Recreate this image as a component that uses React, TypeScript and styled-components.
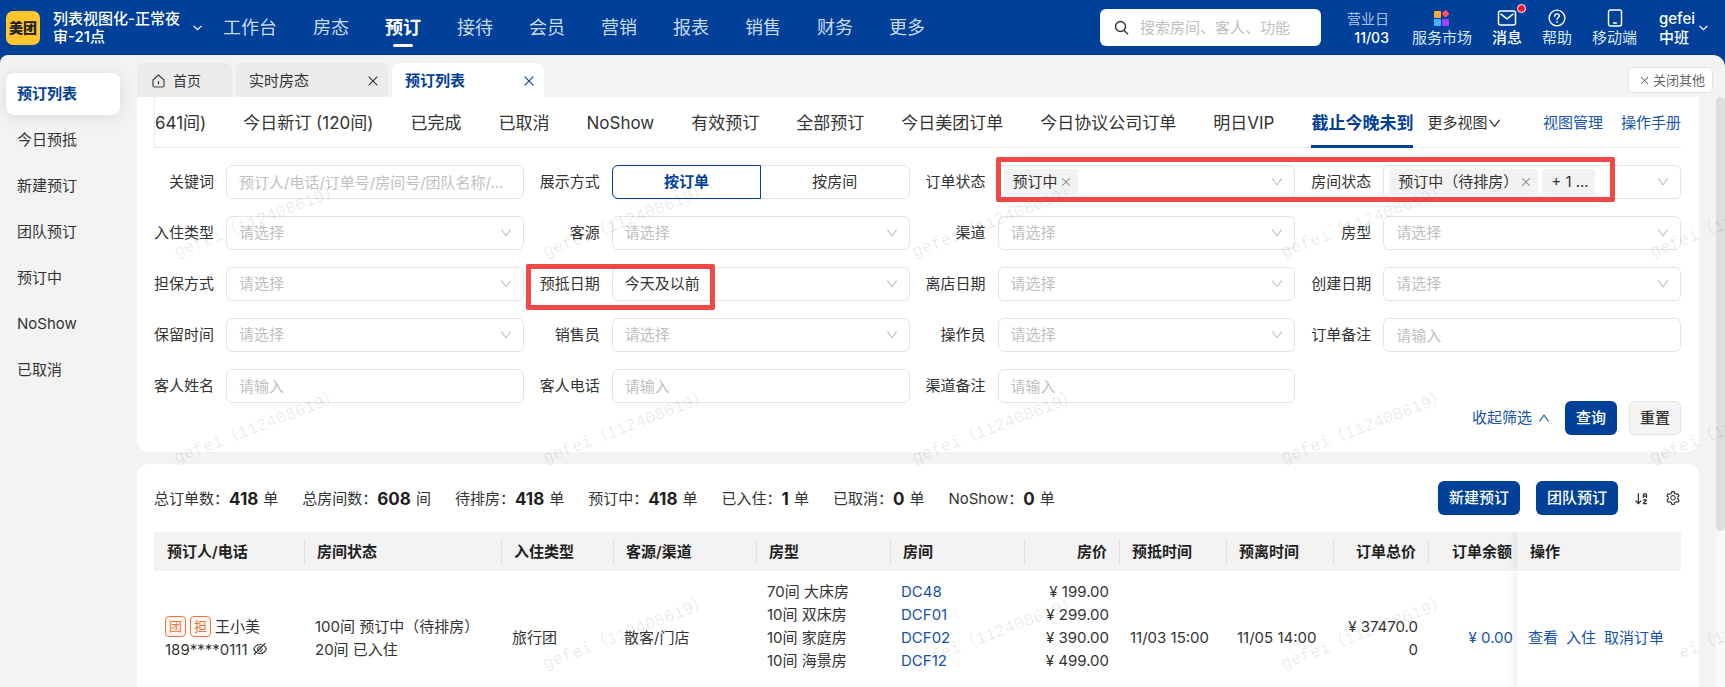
import React from 'react';
import styled, { createGlobalStyle, css } from 'styled-components';
import {
  AiOutlineClose,
  AiOutlineDown,
  AiOutlineEyeInvisible,
  AiOutlineSetting,
  AiOutlineUp,
} from 'react-icons/ai';
import { ArrowDownAZ } from 'lucide-react';

const color = {
  brand: '#004098',
  link: '#1553ac',
  page: '#f3f3f3',
  text: '#333333',
  strong: '#1f1f1f',
  hint: '#c0c0c0',
  line: '#e4e4e4',
  mark: '#f04945',
  tag: '#f2723c',
};

const GlobalStyle = createGlobalStyle`
  *, *::before, *::after { box-sizing: border-box; }
  body {
    margin: 0;
    background: ${color.page};
    color: ${color.text};
    font: 400 15px/20px Inter, "Noto Sans CJK SC", sans-serif;
  }
  button, input, select { font: inherit; color: inherit; margin: 0; }
  button { padding: 0; border: 0; background: none; cursor: pointer; }
  a { color: inherit; text-decoration: none; }
  svg { display: block; flex: none; }
`;

const Shell = styled.div`
  position: relative;
  height: 100vh;
  overflow: hidden;
  display: flex;
  flex-direction: column;
  background: ${color.brand};
`;

/* ---------- top bar ---------- */

const TopBar = styled.header`
  flex: none;
  height: 55px;
  display: flex;
  align-items: center;
  padding: 0 17px 0 6px;
  color: #fff;
`;

const Logo = styled.div`
  width: 34px;
  height: 34px;
  border-radius: 7px;
  background: #ffc62d;
  color: #222;
  font-size: 14px;
  font-weight: 900;
  line-height: 34px;
  text-align: center;
  white-space: nowrap;
`;

const HotelSwitch = styled.button`
  display: flex;
  align-items: center;
  gap: 12px;
  margin-left: 13px;
  font-weight: 500;
  line-height: 18px;
  text-align: left;
`;

const HotelName = styled.span`
  width: 128px;
`;

const MainNav = styled.nav`
  display: flex;
  gap: 36px;
  margin-left: 21px;
`;

const NavLink = styled.a<{ $active?: boolean }>`
  position: relative;
  font-size: 18px;
  line-height: 55px;
  white-space: nowrap;
  color: ${(p) => (p.$active ? '#fff' : '#c9daf0')};
  font-weight: ${(p) => (p.$active ? 700 : 400)};
  ${(p) =>
    p.$active &&
    css`
      &::after {
        content: '';
        position: absolute;
        left: 8px;
        right: 8px;
        bottom: 8px;
        height: 3px;
        border-radius: 2px;
        background: #fff;
      }
    `}
`;

const SearchBox = styled.label`
  display: flex;
  align-items: center;
  gap: 11px;
  width: 221px;
  height: 37px;
  margin-left: auto;
  padding: 0 14px;
  border-radius: 6px;
  background: #fff;
  color: ${color.text};
  input {
    flex: 1;
    min-width: 0;
    padding: 0;
    border: 0;
    outline: 0;
    background: none;
  }
  input::placeholder { color: ${color.hint}; opacity: 1; }
`;

const BusinessDay = styled.div`
  margin: 0 23px 0 26px;
  text-align: right;
  line-height: 19px;
  font-size: 14px;
  font-weight: 500;
  span { display: block; font-weight: 400; color: #a9c1e2; }
`;

const Tools = styled.div`
  display: flex;
  gap: 20px;
`;

const Tool = styled.button<{ $strong?: boolean }>`
  position: relative;
  display: flex;
  flex-direction: column;
  align-items: center;
  gap: 1px;
  line-height: 19px;
  white-space: nowrap;
  color: ${(p) => (p.$strong ? '#fff' : '#dbe6f5')};
  font-weight: ${(p) => (p.$strong ? 500 : 400)};
`;

const Dot = styled.i`
  position: absolute;
  top: -5px;
  right: -4px;
  width: 9px;
  height: 9px;
  border: 1px solid #fff;
  border-radius: 50%;
  background: #f5132b;
`;

const UserMenu = styled.button`
  display: flex;
  align-items: center;
  gap: 4px;
  margin-left: 22px;
  line-height: 19px;
  text-align: left;
  font-weight: 500;
`;

/* ---------- frame ---------- */

const Body = styled.div`
  flex: 1;
  min-height: 0;
  display: flex;
  background: ${color.page};
  border-radius: 8px 12px 0 0;
`;

const Side = styled.nav`
  flex: none;
  width: 137px;
  padding: 18px 17px 0 6px;
  display: flex;
  flex-direction: column;
  gap: 4px;
`;

const SideLink = styled.a<{ $active?: boolean }>`
  height: 42px;
  padding-left: 11px;
  line-height: 42px;
  border-radius: 8px;
  ${(p) =>
    p.$active &&
    css`
      background: #fff;
      color: ${color.brand};
      font-weight: 600;
      box-shadow: 0 2px 16px rgba(0, 0, 0, 0.1);
    `}
`;

const Main = styled.main`
  flex: 1;
  min-width: 0;
  display: flex;
  flex-direction: column;
`;

const TabStrip = styled.div`
  flex: none;
  height: 42px;
  padding: 0 13px 0 0;
  display: flex;
  align-items: flex-end;
  gap: 4px;
`;

const PageTab = styled.div<{ $active?: boolean; $home?: boolean }>`
  width: ${(p) => (p.$home ? 95 : 152)}px;
  height: 34px;
  padding: 2px 8px 0 ${(p) => (p.$home ? 15 : 13)}px;
  display: flex;
  align-items: center;
  justify-content: ${(p) => (p.$home ? 'flex-start' : 'space-between')};
  gap: 8px;
  border-radius: 7px 7px 0 0;
  font-size: ${(p) => (p.$home ? 14 : 15)}px;
  background: ${(p) => (p.$active ? '#fff' : '#ebebeb')};
  color: ${(p) => (p.$active ? color.brand : color.text)};
  font-weight: ${(p) => (p.$active ? 700 : 400)};
`;

const CloseOthers = styled.button`
  height: 24px;
  margin: 0 0 5px auto;
  padding: 0 7px 0 10px;
  display: flex;
  align-items: center;
  gap: 3px;
  border-radius: 4px;
  background: #fff;
  box-shadow: 0 0 2px rgba(0, 0, 0, 0.2);
  font-size: 13px;
  color: #666;
`;

const Scroller = styled.div`
  flex: 1;
  min-height: 0;
  overflow: hidden;
  display: flex;
  gap: 17px;
`;

const Panels = styled.div`
  flex: 1;
  min-width: 0;
  display: flex;
  flex-direction: column;
  gap: 12px;
`;

const ScrollTrack = styled.div`
  width: 9px;
  background: #f9f9f9;
`;

const ScrollThumb = styled.div`
  height: 434px;
  border-radius: 5px;
  background: #dedede;
`;

const Panel = styled.section<{ $fill?: boolean }>`
  flex: none;
  padding: 0 18px 17px 17px;
  background: #fff;
  border-radius: ${(p) => (p.$fill ? '12px' : '0 0 12px 12px')};
  ${(p) => p.$fill && 'padding-top: 17px;'}
`;

/* ---------- saved views ---------- */

const ViewBar = styled.div`
  display: flex;
  height: 51px;
  border-bottom: 1px solid #ececec;
  border-left: 1px solid #ececec;
  white-space: nowrap;
`;

const Views = styled.div`
  display: flex;
  gap: 37px;
`;

const View = styled.button<{ $active?: boolean }>`
  height: 51px;
  padding-top: 3px;
  font-size: 17px;
  border-bottom: 3px solid ${(p) => (p.$active ? color.brand : 'transparent')};
  color: ${(p) => (p.$active ? color.brand : color.text)};
  font-weight: ${(p) => (p.$active ? 600 : 400)};
`;

const MoreViews = styled.button`
  display: flex;
  align-items: center;
  margin-left: 14px;
  padding-top: 2px;
`;

const ViewLinks = styled.div`
  display: flex;
  align-items: center;
  gap: 18px;
  margin-left: auto;
  padding-top: 2px;
  color: ${color.link};
`;

/* ---------- filters ---------- */

const Filters = styled.form`
  display: grid;
  grid-template-columns: repeat(4, minmax(0, 1fr));
  gap: 17px 16px;
  padding-top: 17px;
`;

const Field = styled.div`
  position: relative;
  display: flex;
  align-items: center;
  gap: 12px;
`;

const FieldLabel = styled.label`
  flex: none;
  width: 60px;
  text-align: right;
  white-space: nowrap;
`;

const Control = styled.div`
  position: relative;
  flex: 1;
  min-width: 0;
  height: 34px;
`;

const boxed = css`
  width: 100%;
  height: 34px;
  border: 1px solid ${color.line};
  border-radius: 6px;
  background: #fff;
  outline: 0;
`;

const TextInput = styled.input`
  ${boxed}
  padding: 0 12px;
  text-overflow: ellipsis;
  &::placeholder { color: ${color.hint}; opacity: 1; }
`;

const SelectInput = styled.select<{ $filled?: boolean }>`
  ${boxed}
  appearance: none;
  padding: 0 32px 0 12px;
  color: ${(p) => (p.$filled ? color.text : color.hint)};
`;

const Caret = styled(AiOutlineDown)`
  position: absolute;
  right: 11px;
  top: 10px;
  color: ${color.hint};
  pointer-events: none;
`;

const TagBox = styled.div`
  ${boxed}
  display: flex;
  align-items: center;
  gap: 4px;
  padding: 0 32px 0 5px;
`;

const Chip = styled.span`
  height: 26px;
  padding: 0 6px 0 9px;
  display: flex;
  align-items: center;
  gap: 2px;
  border-radius: 4px;
  background: #f2f2f2;
  white-space: nowrap;
  button { color: #8c8c8c; }
`;

const Segments = styled.div`
  ${boxed}
  display: flex;
`;

const Segment = styled.button<{ $active?: boolean }>`
  flex: 1;
  ${(p) =>
    p.$active &&
    css`
      margin: -1px 0 -1px -1px;
      border: 1px solid ${color.brand};
      border-radius: 6px 0 0 6px;
      color: ${color.brand};
      font-weight: 600;
    `}
`;

const Highlight = styled.div<{ $date?: boolean }>`
  position: absolute;
  z-index: 3;
  border: 5px solid ${color.mark};
  border-radius: 2px;
  pointer-events: none;
  top: ${(p) => (p.$date ? -3 : -8)}px;
  left: ${(p) => (p.$date ? -14 : 70)}px;
  width: ${(p) => (p.$date ? 189 : 619)}px;
  height: ${(p) => (p.$date ? 46 : 45)}px;
`;

const FilterActions = styled.div`
  display: flex;
  justify-content: flex-end;
  align-items: center;
  margin-top: -2px;
`;

const Collapse = styled.button`
  display: flex;
  align-items: center;
  gap: 5px;
  margin-right: 2px;
  color: ${color.link};
`;

const Button = styled.button<{ $plain?: boolean }>`
  height: 34px;
  padding: 0 11px;
  border-radius: 6px;
  font-weight: 500;
  white-space: nowrap;
  color: #fff;
  background: ${color.brand};
  ${(p) =>
    p.$plain &&
    css`
      padding: 0 10px;
      border: 1px solid #e2e2e2;
      background: #f4f4f4;
      color: ${color.text};
    `}
  ${FilterActions} & { margin-left: 12px; }
`;

/* ---------- totals ---------- */

const Summary = styled.div`
  display: flex;
  align-items: center;
  gap: 24px;
  white-space: nowrap;
`;

const Total = styled.div`
  display: flex;
  align-items: center;
  padding-top: 2px;
  b {
    margin-right: 5px;
    font-size: 17px;
    font-weight: 700;
    color: ${color.strong};
  }
`;

const SummaryActions = styled.div`
  display: flex;
  align-items: center;
  gap: 16px;
  margin-left: auto;
`;

/* ---------- orders table ---------- */

const Table = styled.table`
  width: 100%;
  margin-top: 17px;
  border-spacing: 0;
  table-layout: fixed;
`;

const HeadCell = styled.th<{ $right?: boolean }>`
  position: relative;
  height: 39px;
  padding: 0 ${(p) => (p.$right ? 12 : 6)}px 0 13px;
  background: ${color.page};
  color: ${color.strong};
  font-weight: 600;
  text-align: ${(p) => (p.$right ? 'right' : 'left')};
  white-space: nowrap;
  &:not(:first-child)::before {
    content: '';
    position: absolute;
    left: 0;
    top: 8px;
    height: 24px;
    border-left: 1px solid #dfdfdf;
  }
`;

const TailHeadCell = styled(HeadCell)`
  padding-left: 6px;
  padding-right: 5px;
`;

const pinned = css`
  position: relative;
  z-index: 2;
  box-shadow: -4px 0 6px rgba(0, 0, 0, 0.05);
  clip-path: inset(0 0 0 -12px);
`;

const ActionHeadCell = styled(HeadCell)`
  ${pinned}
  &&:not(:first-child)::before { display: none; }
`;

const Cell = styled.td<{ $right?: boolean; $top?: boolean }>`
  padding: 9px 10px 9px 11px;
  line-height: 23px;
  vertical-align: ${(p) => (p.$top ? 'top' : 'middle')};
  text-align: ${(p) => (p.$right ? 'right' : 'left')};
  white-space: nowrap;
`;

const OrderRow = styled.tr`
  height: 133px;
`;

const BreakCell = styled(Cell)`
  white-space: normal;
  word-break: break-all;
`;

const DueCell = styled(Cell)`
  padding-right: 4px;
  color: ${color.link};
`;

const ActionCell = styled(Cell)`
  ${pinned}
  background: #fff;
`;

const RowActions = styled.div`
  display: flex;
  gap: 8px;
  color: ${color.link};
`;

const Line = styled.div<{ $link?: boolean; $right?: boolean }>`
  display: flex;
  align-items: center;
  justify-content: ${(p) => (p.$right ? 'flex-end' : 'flex-start')};
  height: 23px;
  ${(p) => p.$link && `color: ${color.link};`}
`;

const Badge = styled.span`
  width: 21px;
  height: 21px;
  margin-right: 4px;
  border: 1px solid ${color.tag};
  border-radius: 4px;
  background: #fff7f2;
  color: ${color.tag};
  font-size: 13px;
  line-height: 19px;
  text-align: center;
`;

const RevealButton = styled.button`
  margin-left: 4px;
`;

/* ---------- watermark ---------- */

const WatermarkLayer = styled.div`
  position: absolute;
  z-index: 1;
  inset: 0;
  overflow: hidden;
  pointer-events: none;
  display: grid;
  grid-template-columns: repeat(5, 369px);
  grid-auto-rows: 206px;
  padding: 55px 0 0 178px;
`;

const Watermark = styled.span<{ $hidden?: boolean }>`
  align-self: end;
  justify-self: start;
  font: 400 17px/17px 'Liberation Mono', 'Noto Sans CJK SC', monospace;
  color: rgba(0, 0, 0, 0.09);
  white-space: nowrap;
  transform-origin: 0 100%;
  transform: rotate(-21deg);
  visibility: ${(p) => (p.$hidden ? 'hidden' : 'visible')};
`;

/* ---------- icons ---------- */

const SearchIcon = () => (
  <svg width="15" height="15" viewBox="0 0 15 15" fill="none" stroke="#333" strokeWidth="1.4">
    <circle cx="6.5" cy="6.5" r="5" />
    <path d="M10.2 10.4 14 14.2" />
  </svg>
);

const Chevron = () => (
  <svg width="9" height="6" viewBox="0 0 9 6" fill="none" stroke="#fff" strokeWidth="1.3">
    <path d="M.6.9 4.5 4.7 8.4.9" />
  </svg>
);

const MarketIcon = () => (
  <svg width="17" height="18" viewBox="0 0 17 18">
    <rect x="1" y="2" width="7" height="7" rx="1" fill="#ffa63d" />
    <rect x="9.7" y="1.9" width="5.6" height="5.6" rx="1" fill="#ff5263" transform="rotate(45 12.5 4.8)" />
    <rect x="1" y="10" width="7" height="7" rx="1" fill="#3fb4ff" />
    <rect x="9" y="10" width="7" height="7" rx="1" fill="#a13dff" />
  </svg>
);

const MailIcon = () => (
  <svg width="20" height="18" viewBox="0 0 20 18" fill="none" stroke="#fff" strokeWidth="1.5" strokeLinejoin="round">
    <rect x="1.5" y="2" width="17" height="14" rx="2" />
    <path d="m4 5.2 6 4.6 6-4.6" strokeLinecap="round" />
  </svg>
);

const HelpIcon = () => (
  <svg width="18" height="18" viewBox="0 0 18 18" fill="none" stroke="#fff" strokeWidth="1.4" strokeLinecap="round">
    <circle cx="9" cy="9" r="7.9" />
    <path d="M6.7 7.2c0-1.4 1-2.3 2.3-2.3s2.3.9 2.3 2.1c0 1.6-2.3 1.7-2.3 3.4" />
    <path d="M9 12.9v.1" strokeWidth="1.7" />
  </svg>
);

const PhoneIcon = () => (
  <svg width="16" height="18" viewBox="0 0 16 18" fill="none" stroke="#fff" strokeWidth="1.4" strokeLinecap="round">
    <rect x="1.5" y="1" width="13" height="16" rx="2" />
    <path d="M6.5 14h3" />
  </svg>
);

const HomeIcon = () => (
  <svg width="13" height="14" viewBox="0 0 13 14" fill="none" stroke="#444" strokeWidth="1.2" strokeLinejoin="round">
    <path d="M1 6 6.5 1 12 6v5.5a1.5 1.5 0 0 1-1.500 1.500h-8A1.500 1.500 0 0 1 1 11.500z" />
    <path d="M6.5 7.5v2.5" strokeLinecap="round" />
  </svg>
);

/* ---------- data ---------- */

const navItems = ['工作台', '房态', '预订', '接待', '会员', '营销', '报表', '销售', '财务', '更多'];
const sideItems = ['预订列表', '今日预抵', '新建预订', '团队预订', '预订中', 'NoShow', '已取消'];
const views = [
  '641间)',
  '今日新订 (120间)',
  '已完成',
  '已取消',
  'NoShow',
  '有效预订',
  '全部预订',
  '今日美团订单',
  '今日协议公司订单',
  '明日VIP',
  '截止今晚未到',
];
const totals: [string, number, string][] = [
  ['总订单数', 418, '单'],
  ['总房间数', 608, '间'],
  ['待排房', 418, '单'],
  ['预订中', 418, '单'],
  ['已入住', 1, '单'],
  ['已取消', 0, '单'],
  ['NoShow', 0, '单'],
];
const columnWidths = [150, 197, 112, 143, 134, 134, 95, 107, 107, 95, 89, 164];
const rooms = [
  ['70间 大床房', 'DC48', '¥ 199.00'],
  ['10间 双床房', 'DCF01', '¥ 299.00'],
  ['10间 家庭房', 'DCF02', '¥ 390.00'],
  ['10间 海景房', 'DCF12', '¥ 499.00'],
];

type FilterProps = { id: string; label: string; children?: React.ReactNode };

const SelectField = ({ id, label, value, children }: FilterProps & { value?: string }) => (
  <Field>
    <FieldLabel htmlFor={id}>{label}</FieldLabel>
    <Control>
      <SelectInput id={id} $filled={Boolean(value)}>
        <option>{value || '请选择'}</option>
      </SelectInput>
      <Caret size={14} />
    </Control>
    {children}
  </Field>
);

const InputField = ({ id, label, hint = '请输入' }: FilterProps & { hint?: string }) => (
  <Field>
    <FieldLabel htmlFor={id}>{label}</FieldLabel>
    <Control>
      <TextInput id={id} placeholder={hint} />
    </Control>
  </Field>
);

const TagField = ({ id, label, tags, more, children }: FilterProps & { tags: string[]; more?: string }) => (
  <Field>
    <FieldLabel as="span" id={id}>{label}</FieldLabel>
    <Control>
      <TagBox role="group" aria-labelledby={id}>
        {tags.map((tag) => (
          <Chip key={tag}>
            {tag}
            <button type="button" aria-label={`移除${tag}`}>
              <AiOutlineClose size={12} />
            </button>
          </Chip>
        ))}
        {more && <Chip>{more}</Chip>}
      </TagBox>
      <Caret size={14} />
    </Control>
    {children}
  </Field>
);

export default function App() {
  return (
    <Shell>
      <GlobalStyle />
      <TopBar>
        <Logo>美团</Logo>
        <HotelSwitch>
          <HotelName>列表视图化-正常夜审-21点</HotelName>
          <Chevron />
        </HotelSwitch>
        <MainNav>
          {navItems.map((item) => (
            <NavLink key={item} href="#" $active={item === '预订'}>{item}</NavLink>
          ))}
        </MainNav>
        <SearchBox>
          <SearchIcon />
          <input type="text" aria-label="搜索" placeholder="搜索房间、客人、功能" />
        </SearchBox>
        <BusinessDay><span>营业日</span>11/03</BusinessDay>
        <Tools>
          <Tool><MarketIcon />服务市场</Tool>
          <Tool $strong><MailIcon />消息<Dot /></Tool>
          <Tool><HelpIcon />帮助</Tool>
          <Tool><PhoneIcon />移动端</Tool>
        </Tools>
        <UserMenu>
          <span>gefei<br />中班</span>
          <Chevron />
        </UserMenu>
      </TopBar>

      <Body>
        <Side>
          {sideItems.map((item, i) => (
            <SideLink key={item} href="#" $active={i === 0}>{item}</SideLink>
          ))}
        </Side>
        <Main>
          <TabStrip>
            <PageTab $home><HomeIcon />首页</PageTab>
            <PageTab>
              实时房态
              <button aria-label="关闭实时房态"><AiOutlineClose size={14} /></button>
            </PageTab>
            <PageTab $active>
              预订列表
              <button aria-label="关闭预订列表"><AiOutlineClose size={14} /></button>
            </PageTab>
            <CloseOthers><AiOutlineClose size={11} />关闭其他</CloseOthers>
          </TabStrip>

          <Scroller>
            <Panels>
              <Panel>
                <ViewBar>
                  <Views>
                    {views.map((view, i) => (
                      <View key={view} $active={i === views.length - 1}>{view}</View>
                    ))}
                  </Views>
                  <MoreViews>更多视图<AiOutlineDown size={15} /></MoreViews>
                  <ViewLinks>
                    <a href="#">视图管理</a>
                    <a href="#">操作手册</a>
                  </ViewLinks>
                </ViewBar>

                <Filters>
                  <InputField id="keyword" label="关键词" hint="预订人/电话/订单号/房间号/团队名称/..." />
                  <Field>
                    <FieldLabel as="span" id="mode">展示方式</FieldLabel>
                    <Control>
                      <Segments role="group" aria-labelledby="mode">
                        <Segment type="button" $active>按订单</Segment>
                        <Segment type="button">按房间</Segment>
                      </Segments>
                    </Control>
                  </Field>
                  <TagField id="orderState" label="订单状态" tags={['预订中']}>
                    <Highlight />
                  </TagField>
                  <TagField id="roomState" label="房间状态" tags={['预订中（待排房）']} more="+ 1 ..." />
                  <SelectField id="stayType" label="入住类型" />
                  <SelectField id="source" label="客源" />
                  <SelectField id="channel" label="渠道" />
                  <SelectField id="roomType" label="房型" />
                  <SelectField id="guarantee" label="担保方式" />
                  <SelectField id="arrival" label="预抵日期" value="今天及以前">
                    <Highlight $date />
                  </SelectField>
                  <SelectField id="departure" label="离店日期" />
                  <SelectField id="created" label="创建日期" />
                  <SelectField id="holdTime" label="保留时间" />
                  <SelectField id="seller" label="销售员" />
                  <SelectField id="operator" label="操作员" />
                  <InputField id="orderNote" label="订单备注" />
                  <InputField id="guestName" label="客人姓名" />
                  <InputField id="guestPhone" label="客人电话" />
                  <InputField id="channelNote" label="渠道备注" />
                </Filters>
                <FilterActions>
                  <Collapse type="button">收起筛选<AiOutlineUp size={14} /></Collapse>
                  <Button type="button">查询</Button>
                  <Button type="button" $plain>重置</Button>
                </FilterActions>
              </Panel>

              <Panel $fill>
                <Summary>
                  {totals.map(([label, count, unit]) => (
                    <Total key={label}>{label}：<b>{count}</b>{unit}</Total>
                  ))}
                  <SummaryActions>
                    <Button>新建预订</Button>
                    <Button>团队预订</Button>
                    <button aria-label="排序"><ArrowDownAZ size={15} /></button>
                    <button aria-label="设置"><AiOutlineSetting size={16} /></button>
                  </SummaryActions>
                </Summary>

                <Table>
                  <colgroup>
                    {columnWidths.map((width, i) => <col key={i} width={width} />)}
                  </colgroup>
                  <thead>
                    <tr>
                      <HeadCell>预订人/电话</HeadCell>
                      <HeadCell>房间状态</HeadCell>
                      <HeadCell>入住类型</HeadCell>
                      <HeadCell>客源/渠道</HeadCell>
                      <HeadCell>房型</HeadCell>
                      <HeadCell>房间</HeadCell>
                      <HeadCell $right>房价</HeadCell>
                      <HeadCell>预抵时间</HeadCell>
                      <HeadCell>预离时间</HeadCell>
                      <HeadCell $right>订单总价</HeadCell>
                      <TailHeadCell $right>订单余额</TailHeadCell>
                      <ActionHeadCell>操作</ActionHeadCell>
                    </tr>
                  </thead>
                  <tbody>
                    <OrderRow>
                      <Cell>
                        <Line><Badge>团</Badge><Badge>担</Badge>王小美</Line>
                        <Line>
                          189****0111
                          <RevealButton aria-label="显示电话"><AiOutlineEyeInvisible size={16} /></RevealButton>
                        </Line>
                      </Cell>
                      <Cell>
                        <Line>100间 预订中（待排房）</Line>
                        <Line>20间 已入住</Line>
                      </Cell>
                      <Cell>旅行团</Cell>
                      <Cell>散客/门店</Cell>
                      <Cell $top>{rooms.map((r) => <Line key={r[1]}>{r[0]}</Line>)}</Cell>
                      <Cell $top>{rooms.map((r) => <Line key={r[1]} $link><a href="#">{r[1]}</a></Line>)}</Cell>
                      <Cell $top>{rooms.map((r) => <Line key={r[1]} $right>{r[2]}</Line>)}</Cell>
                      <Cell>11/03 15:00</Cell>
                      <Cell>11/05 14:00</Cell>
                      <BreakCell $right>¥ 37470.00</BreakCell>
                      <DueCell $right>¥ 0.00</DueCell>
                      <ActionCell>
                        <RowActions>
                          <a href="#">查看</a>
                          <a href="#">入住</a>
                          <a href="#">取消订单</a>
                        </RowActions>
                      </ActionCell>
                    </OrderRow>
                  </tbody>
                </Table>
              </Panel>
            </Panels>
            <ScrollTrack><ScrollThumb /></ScrollTrack>
          </Scroller>
        </Main>
      </Body>

      <WatermarkLayer aria-hidden="true">
        {Array.from({ length: 15 }, (_, i) => (
          <Watermark key={i} $hidden={i === 10}>gefei（112408619）</Watermark>
        ))}
      </WatermarkLayer>
    </Shell>
  );
}
